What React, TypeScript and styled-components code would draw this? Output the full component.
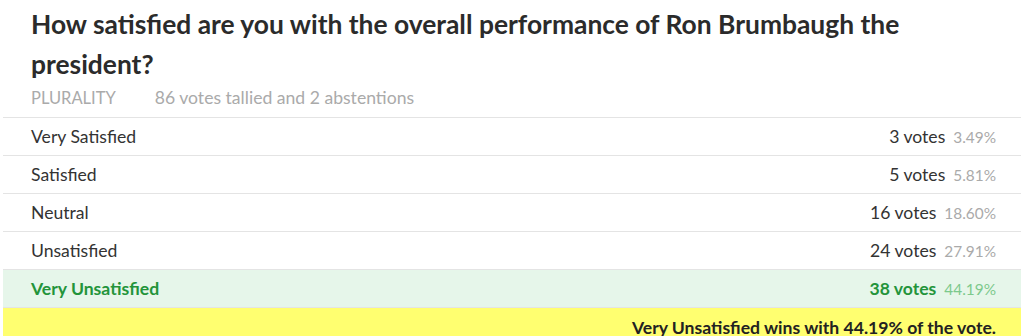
import React, { FC } from "react";
import styled, { createGlobalStyle } from "styled-components";

type Choice = {
  name: string;
  votes: number;
  percent: string;
};

const choices: Choice[] = [
  { name: "Very Satisfied", votes: 3, percent: "3.49%" },
  { name: "Satisfied", votes: 5, percent: "5.81%" },
  { name: "Neutral", votes: 16, percent: "18.60%" },
  { name: "Unsatisfied", votes: 24, percent: "27.91%" },
  { name: "Very Unsatisfied", votes: 38, percent: "44.19%" },
];

const winner = "Very Unsatisfied";

const App: FC = () => {
  return (
    <>
      <GlobalStyle />
      <Container>
        <Header>
          <Title>
            How satisfied are you with the overall performance of Ron Brumbaugh
            the president?
          </Title>
          <Meta>
            <Method>PLURALITY</Method>
            <span>86 votes tallied and 2 abstentions</span>
          </Meta>
        </Header>

        {/* Results */}
        <Results>
          {choices.map((c) => (
            <Row key={c.name} $winner={c.name === winner}>
              <span>{c.name}</span>
              <Tally>
                {c.votes} votes
                <Percent $winner={c.name === winner}>{c.percent}</Percent>
              </Tally>
            </Row>
          ))}
          <Footer>Very Unsatisfied wins with 44.19% of the vote.</Footer>
        </Results>
      </Container>
    </>
  );
};

const GlobalStyle = createGlobalStyle`
  body {
    margin: 0;
    overflow: hidden;
    background: #fff;
    font-family: Lato, "Open Sans", sans-serif;
    font-size: 17.6px;
    color: #333;
  }
`;

const Container = styled.div`
  padding-left: 3px;
`;

const Header = styled.div`
  padding: 0 28px;
`;

const Title = styled.h1`
  margin: 0;
  padding-top: 5px;
  font-size: 26.4px;
  line-height: 39.6px;
  font-weight: 700;
  color: #2b2b2b;
`;

const Meta = styled.div`
  display: flex;
  align-items: baseline;
  gap: 39px;
  margin-top: 2px;
  line-height: 24px;
  color: #aaa;
  padding: 0 0 7px;
`;

const Method = styled.span`
  font-size: 16.5px;
`;

const Results = styled.div`
  border-top: 1px solid #e4e4e4;
`;

const Row = styled.div<{ $winner?: boolean }>`
  display: flex;
  justify-content: space-between;
  align-items: center;
  height: 37px;
  padding: 0 25px 0 28px;
  border-bottom: 1px solid #e4e4e4;
  background: ${({ $winner }) => ($winner ? "#e6f6ea" : "#fff")};
  color: ${({ $winner }) => ($winner ? "#23943a" : "#333")};
  font-weight: ${({ $winner }) => ($winner ? 700 : 400)};
`;

const Tally = styled.span`
  display: flex;
  align-items: baseline;
  gap: 8px;
`;

const Percent = styled.span<{ $winner?: boolean }>`
  font-size: 15.4px;
  font-weight: 400;
  color: ${({ $winner }) => ($winner ? "#7cc98c" : "#aaa")};
`;

const Footer = styled.div`
  display: flex;
  justify-content: flex-end;
  align-items: center;
  height: 38px;
  padding: 0 25px;
  background: #ffff70;
  font-weight: 700;
  color: #222;
`;

export default App;
